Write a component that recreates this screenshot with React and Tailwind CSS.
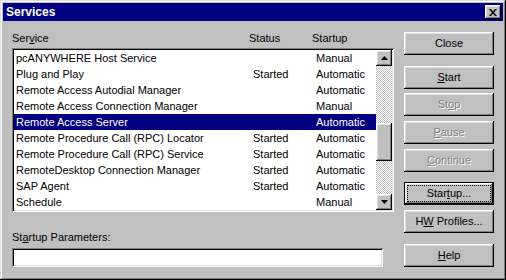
import React from 'react';

const raised =
  'shadow-[inset_-1px_-1px_0_#000,inset_1px_1px_0_#fff,inset_-2px_-2px_0_#808080,inset_2px_2px_0_#dfdfdf]';
const sunken =
  'shadow-[inset_1px_1px_0_#808080,inset_-1px_-1px_0_#fff,inset_2px_2px_0_#000,inset_-2px_-2px_0_#dfdfdf]';

const services = [
  ['pcANYWHERE Host Service', '', 'Manual'],
  ['Plug and Play', 'Started', 'Automatic'],
  ['Remote Access Autodial Manager', '', 'Automatic'],
  ['Remote Access Connection Manager', '', 'Manual'],
  ['Remote Access Server', '', 'Automatic'],
  ['Remote Procedure Call (RPC) Locator', 'Started', 'Automatic'],
  ['Remote Procedure Call (RPC) Service', 'Started', 'Automatic'],
  ['RemoteDesktop Connection Manager', 'Started', 'Automatic'],
  ['SAP Agent', 'Started', 'Automatic'],
  ['Schedule', '', 'Manual'],
];

// label with one underlined mnemonic letter
const Mnemonic = ({ text, at }) => {
  if (at < 0) return <span className="whitespace-pre">{text}</span>;
  return (
    <span className="whitespace-pre">
      {text.slice(0, at)}
      <u className="underline-offset-[1px]">{text[at]}</u>
      {text.slice(at + 1)}
    </span>
  );
};

const WinButton = ({ text, at = -1, disabled, focused, className = '' }) => (
  <div
    className={`h-[23px] w-[90px] flex ${raised} ${focused ? 'border border-black' : ''} ${className}`}
  >
    <div
      className={`flex-1 flex items-center justify-center ${
        focused ? 'm-[2px] border border-dotted border-black' : ''
      } ${disabled ? 'text-[#808080] [text-shadow:1px_1px_0_#fff]' : 'text-black'}`}
    >
      <Mnemonic text={text} at={at} />
    </div>
  </div>
);

const Arrow = ({ down }) => (
  <div className={`w-[16px] h-[16px] bg-[#c0c0c0] flex items-center justify-center ${raised}`}>
    <svg width="7" height="4" viewBox="0 0 7 4">
      {down ? <path d="M0 0h7L3.5 4z" fill="#000" /> : <path d="M3.5 0L7 4H0z" fill="#000" />}
    </svg>
  </div>
);

export default function App() {
  return (
    <div
      className="w-[506px] h-[280px] bg-[#c0c0c0] p-[3px] flex flex-col text-[11px] leading-[13px] text-black shadow-[inset_-1px_-1px_0_#000,inset_1px_1px_0_#dfdfdf,inset_-2px_-2px_0_#808080,inset_2px_2px_0_#fff]"
      style={{ fontFamily: '"Liberation Sans", Arial, sans-serif' }}
    >
      <div className="h-[18px] bg-[#000080] flex items-center justify-between pl-[3px] pr-[2px]">
        <span className="text-white font-bold text-[12px]">Services</span>
        <div className={`w-[16px] h-[14px] bg-[#c0c0c0] flex items-center justify-center ${raised}`}>
          <svg width="8" height="7" viewBox="0 0 8 7">
            <path d="M0 0h2l2 2.5L6 0h2L5 3.5 8 7H6L4 4.5 2 7H0l3-3.5z" fill="#000" />
          </svg>
        </div>
      </div>

      <div className="flex pl-[9px]">
        <div className="w-[382px] flex flex-col">
          <div className="pt-[11px] h-[24px] flex">
            <span className="w-[237px]">
              <Mnemonic text="Service" at={3} />
            </span>
            <span className="w-[63px]">Status</span>
            <span>Startup</span>
          </div>
          <div className={`mt-[3px] h-[164px] bg-white p-[2px] flex ${sunken}`}>
            <div className="flex-1 flex flex-col">
              {services.map(([name, status, startup], i) => (
                <div
                  key={name}
                  className={`h-[16px] flex items-center pl-[2px] ${
                    i === 4 ? 'bg-[#000080] text-white' : ''
                  }`}
                >
                  <span className="w-[237px] whitespace-nowrap">{name}</span>
                  <span className="w-[63px]">{status}</span>
                  <span>{startup}</span>
                </div>
              ))}
            </div>
            <div className="w-[16px] flex flex-col">
              <Arrow />
              <div className="flex-1 flex flex-col bg-[repeating-conic-gradient(#fff_0_25%,#c0c0c0_0_50%)] bg-[length:2px_2px]">
                <div className="h-[57px]" />
                <div className={`h-[38px] bg-[#c0c0c0] ${raised}`} />
              </div>
              <Arrow down />
            </div>
          </div>
          <div className="mt-[19px]">
            <Mnemonic text="Startup Parameters:" at={2} />
          </div>
          <div className={`mt-[4px] w-[371px] h-[19px] bg-white ${sunken}`} />
        </div>

        <div className="ml-[10px] pt-[11px] flex flex-col">
          <WinButton text="Close" />
          <WinButton text="Start" at={0} className="mt-[11px]" />
          <WinButton text="Stop" at={2} disabled className="mt-[4px]" />
          <WinButton text="Pause" at={0} disabled className="mt-[5px]" />
          <WinButton text="Continue" at={0} disabled className="mt-[5px]" />
          <WinButton text="Startup..." at={4} focused className="mt-[10px]" />
          <WinButton text="HW Profiles..." at={1} className="mt-[5px]" />
          <WinButton text="Help" at={0} className="mt-[11px]" />
        </div>
      </div>
    </div>
  );
}
